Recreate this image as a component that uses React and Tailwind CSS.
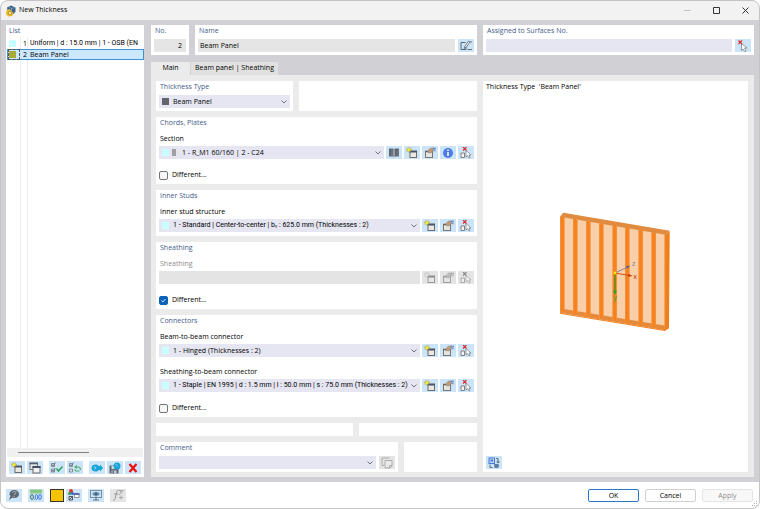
import { useState } from 'react'

const CYAN = '#c8ffff'

/* ---------- icons ---------- */

function Icon({ children, className = 'h-3 w-3' }) {
    return (
        <svg viewBox="0 0 24 24" fill="none" className={className} aria-hidden="true">
            {children}
        </svg>
    )
}

const NewIcon = () => (
    <Icon>
        <rect x="8" y="9" width="13" height="12" fill="#ebe8e2" stroke="#6c6c6c" strokeWidth="2" />
        <path d="M7 9h15" stroke="#4a5468" strokeWidth="4" />
        <path d="M6 0v11M0 5.500h12M2 1.500l8 8M10 1.500l-8 8" stroke="#a89b34" strokeWidth="1.6" />
        <circle cx="6" cy="5.500" r="3.2" fill="#f3ea22" />
    </Icon>
)

const CopyWindowIcon = () => (
    <Icon>
        <rect x="2" y="2" width="15" height="13" fill="#e4e6ea" stroke="#777" strokeWidth="2" />
        <path d="M1 3h17" stroke="#555c6c" strokeWidth="3" />
        <rect x="8" y="9" width="14" height="13" fill="#f2f2f2" stroke="#666" strokeWidth="2" />
        <path d="M7 10h16" stroke="#454d60" strokeWidth="4" />
    </Icon>
)

const CheckAllIcon = () => (
    <Icon>
        <path d="M1 3h6v6H1zM1 14h6v6H1z" stroke="#777" strokeWidth="1.6" />
        <path d="M2 5l2 3 5-7M2 16l2 3 5-7" stroke="#555" strokeWidth="1.4" />
        <path d="M11 13l4 5 8-9" stroke="#25a35a" strokeWidth="3" />
    </Icon>
)

const CheckInvertIcon = () => (
    <Icon>
        <path d="M1 3h6v6H1zM1 14h6v6H1z" stroke="#777" strokeWidth="1.6" />
        <path d="M2 5l2 3 5-7" stroke="#555" strokeWidth="1.4" />
        <path d="M13 10h6c3 0 4 2 4 6M21 18h-5c-3 0-4-1-4-3" stroke="#4fae72" strokeWidth="2.4" />
        <path d="M16 6l-6 4 6 4z" fill="#4fae72" />
    </Icon>
)

const ImportIcon = () => (
    <Icon>
        <path d="M1 12c0-5 4-7 8-7 3 0 5 1 6 3h3V5l6 7-6 7v-3h-3c-1 2-3 3-6 3-4 0-8-2-8-7z" fill="#17a5d8" />
        <path d="M5 12l3-3 2 3-3 3" stroke="#a8e2f6" strokeWidth="1.600" />
    </Icon>
)

const SaveIcon = () => (
    <Icon>
        <path d="M1 7h18v16H1z" fill="#5d6874" />
        <rect x="5" y="8" width="9" height="6" fill="#d5dde5" />
        <rect x="5" y="17" width="10" height="6" fill="#c5ccd3" />
        <rect x="7" y="18" width="3" height="5" fill="#5d6874" />
        <circle cx="16" cy="8" r="7" fill="#17a5d8" />
        <path d="M12 6l3-2 2 3-2 3" stroke="#7fd3ee" strokeWidth="1.4" />
    </Icon>
)

const DeleteIcon = () => (
    <Icon>
        <path d="M5 4l14 16M19 4L5 20" stroke="#ee1010" strokeWidth="4.5" />
    </Icon>
)

const BookIcon = () => (
    <Icon>
        <path d="M2 3h8l2 2 2-2h8v16h-8l-2 2-2-2H2z" fill="#5f6870" />
        <path d="M12 5v15" stroke="#c3d3df" strokeWidth="2" />
        <path d="M8 4v14M20 4v14" stroke="#7d868f" strokeWidth="1.5" />
    </Icon>
)

const EditIcon = () => (
    <Icon>
        <rect x="3" y="9" width="14" height="12" fill="#e6e4df" stroke="#777" strokeWidth="2" />
        <path d="M2 9h16" stroke="#666" strokeWidth="3" />
        <path d="M8 7l5-5h7l-2 6-5 4-5-1z" fill="#c09a78" stroke="#97806b" />
        <path d="M17 3h7M19 7h4" stroke="#6b91c8" strokeWidth="2.6" />
    </Icon>
)

const InfoIcon = () => (
    <Icon>
        <circle cx="12" cy="12" r="10" fill="#4f7be6" />
        <path d="M12 10v8M12 5v3" stroke="#fff" strokeWidth="3" />
    </Icon>
)

const PickIcon = () => (
    <Icon>
        <path d="M2 12h7v9H2z" fill="#f4f4f4" stroke="#777" strokeWidth="1.8" />
        <path d="M12 7v13l3-3 3 5 2-1-2-5h4z" fill="#fff" stroke="#777" strokeWidth="1.4" />
        <path d="M6 0l7 7M13 0L6 7" stroke="#de2c2c" strokeWidth="2.4" />
    </Icon>
)

const PickSurfaceIcon = () => (
    <Icon>
        <path d="M9 7v14l3-3 3 5 3-1-3-6h5z" fill="#fff" stroke="#777" strokeWidth="1.4" />
        <path d="M3 1l7 7M10 1L3 8" stroke="#de2c2c" strokeWidth="2.6" />
    </Icon>
)

const RenameIcon = () => (
    <Icon>
        <path d="M11 5H2v14h10v-6" stroke="#5b6670" strokeWidth="2" />
        <path d="M8 17l2-5 7-10 3 2-7 10z" fill="#e9f2f8" stroke="#5b6670" strokeWidth="1.6" />
        <path d="M20 4h4M15 19h9" stroke="#5b6670" strokeWidth="1.8" />
    </Icon>
)

const CopyIcon = () => (
    <Icon>
        <path d="M17 2H2v15h4" stroke="#888" strokeWidth="2" />
        <path d="M8 7h14v11l-4 4H8z" fill="#eee" stroke="#888" strokeWidth="2" />
        <path d="M22 17h-5v5" stroke="#888" strokeWidth="2" />
    </Icon>
)

const SyncIcon = () => (
    <Icon>
        <rect x="2" y="2" width="11" height="11" fill="#bcd2fa" stroke="#4a78d4" strokeWidth="2" />
        <path d="M5 5h5v4H5z" fill="#4a78d4" />
        <path d="M16 3h4v8M4 15v6h5" stroke="#5a6c80" strokeWidth="2" />
        <path d="M16 9l4 4 4-4z" fill="#5a6c80" />
        <path d="M12 14h8c3 0 3 8-2 8h-5z" fill="#5c7ea6" />
    </Icon>
)

const HelpIcon = () => (
    <Icon>
        <path d="M12 2c6 0 10 4 10 8 0 5-4 8-9 8-2 0-3 0-4-1l-7 5 3-8c-1-1-2-2-2-4 0-4 4-8 9-8z" fill="#5d676f" />
        <path d="M9 8c0-4 7-4 7 0 0 2-4 2-4 4M12 14v2" stroke="#b9c6d0" strokeWidth="1.8" />
    </Icon>
)

const UnitsIcon = () => (
    <Icon>
        <rect x="0" y="1" width="24" height="8" fill="#8ccb84" />
        <path d="M4 2v3M8 2v3M12 2v4M16 2v3M20 2v3" stroke="#6fae69" />
        <ellipse cx="4" cy="16" rx="2.800" ry="5" stroke="#3f6f64" strokeWidth="2" />
        <path d="M9 21v1" stroke="#3f6f64" strokeWidth="2" />
        <ellipse cx="13" cy="16" rx="2.600" ry="5" stroke="#3b78e0" strokeWidth="2" />
        <ellipse cx="20" cy="16" rx="2.600" ry="5" stroke="#3b78e0" strokeWidth="2" />
    </Icon>
)

const ColorListIcon = () => (
    <Icon>
        <circle cx="6" cy="4" r="4" fill="#d83a2b" />
        <circle cx="3" cy="9" r="3" fill="#3d9b46" />
        <circle cx="9" cy="9" r="3" fill="#3d61cf" />
        <path d="M2 15h7v7H2zM2 22l7-7" stroke="#555" strokeWidth="2" />
        <path d="M13 10h9v7h-9z" fill="#fff" stroke="#777" strokeWidth="1.6" />
        <path d="M12 10h11" stroke="#3d51a8" strokeWidth="3" />
    </Icon>
)

const MonitorIcon = () => (
    <Icon>
        <rect x="1" y="3" width="22" height="14" fill="#cfe3f3" stroke="#7890a4" strokeWidth="2" />
        <path d="M4 10c4-6 12-6 16 0-4 5-12 5-16 0z" fill="#6d95b4" />
        <circle cx="12" cy="10" r="3" fill="#3f647f" />
        <path d="M12 15v6M6 22h12" stroke="#5c7890" strokeWidth="2.4" />
    </Icon>
)

const FormulaIcon = () => (
    <Icon>
        <path d="M2 22c3 1 4-1 5-6l2-9c1-4 3-5 6-4M4 10h9" stroke="#666" strokeWidth="2" />
        <path d="M15 3h8M15 3l5 6M22 3l-8 9M18 13v8M14 17h8" stroke="#777" strokeWidth="1.8" />
    </Icon>
)

const AppIcon = () => (
    <Icon>
        <path d="M4 5l8-4 9 4v8l-4 5H6z" fill="#3d6289" />
        <path d="M8 4l5 3 6-2M13 7v6" stroke="#86abc9" strokeWidth="1.6" />
        <path d="M3 10l6-2 8 8-2 6-9 1-4-5z" fill="#e8bb32" />
        <circle cx="10" cy="16" r="3.500" fill="#fbe58b" stroke="#ad8114" strokeWidth="1.4" />
    </Icon>
)

const Chevron = () => (
    <svg viewBox="0 0 8 8" fill="none" className="pointer-events-none absolute top-[3px] right-[2px] h-2 w-2">
        <path d="M1.5 2.500L4 5l2.500-2.500" stroke="#777" />
    </svg>
)

/* ---------- controls ---------- */

function ToolButton({ label, children, disabled }) {
    return (
        <button
            type="button"
            aria-label={label}
            disabled={disabled}
            className="flex h-[13px] w-4 shrink-0 items-center justify-center bg-[#cce4f7] disabled:bg-[#e4e4e4]"
        >
            {disabled ? <span className="opacity-60 grayscale">{children}</span> : children}
        </button>
    )
}

function Panel({ title, className = '', bottom = 'pb-[3px]', children }) {
    return (
        <section className={`bg-white px-[3px] ${bottom} ${className}`}>
            <h2 className="h-3 pl-px leading-3 text-[#445c8a]">{title}</h2>
            {children}
        </section>
    )
}

// long values with separators are set in Roboto, whose bar and spaces are narrower
function SelectBox({ id, label, value, swatches = [], pad = 'pl-[14px]', long }) {
    return (
        <div className="relative min-w-0 flex-1">
            <select
                id={id}
                aria-label={label}
                className={`block h-[13px] w-full appearance-none bg-[#e6e6f2] pr-[10px] leading-[13px] ${pad} ${long ? "font-['Roboto','Open_Sans',sans-serif]" : ''}`}
            >
                <option>{value}</option>
            </select>
            <span className="pointer-events-none absolute top-[3px] left-[3px] flex gap-[3px]">
                {swatches.map((s) => (
                    <span key={s.color} className={`h-[7px] ${s.narrow ? 'w-1' : 'w-[7px]'}`} style={{ background: s.color }} />
                ))}
            </span>
            <Chevron />
        </div>
    )
}

function Field({ id, label, disabled, first = 'mt-1', children }) {
    return (
        <div className={first}>
            <label htmlFor={id} className={`block h-3 pl-px leading-3 ${disabled ? 'text-[#8c8c8c]' : ''}`}>
                {label}
            </label>
            <div className="mt-px flex gap-[2px]">
                {children}
                <ToolButton label="New" disabled={disabled}><NewIcon /></ToolButton>
                <ToolButton label="Edit" disabled={disabled}><EditIcon /></ToolButton>
                {id === 'section' && <ToolButton label="Info"><InfoIcon /></ToolButton>}
                <ToolButton label="Pick" disabled={disabled}><PickIcon /></ToolButton>
            </div>
        </div>
    )
}

function Different({ defaultChecked = false }) {
    const [checked, setChecked] = useState(defaultChecked)
    return (
        <label className="mt-[10px] flex h-3 w-fit items-center gap-1 leading-3">
            <span className="relative flex">
                <input
                    type="checkbox"
                    checked={checked}
                    onChange={(e) => setChecked(e.target.checked)}
                    className="h-[9px] w-[9px] appearance-none rounded-[2px] border border-[#757575] bg-[#f6f6f6] checked:border-[#0a63b8] checked:bg-[#0a63b8]"
                />
                {checked && (
                    <svg viewBox="0 0 9 9" fill="none" className="pointer-events-none absolute inset-0 h-[9px] w-[9px]">
                        <path d="M2.500 4.500L4 6l2.500-3" stroke="#fff" strokeWidth="0.8" />
                    </svg>
                )}
            </span>
            Different...
        </label>
    )
}

/* ---------- wall preview ---------- */

const studs = [45, 84, 123, 162, 202, 240, 280, 319, 358]

function WallPreview() {
    const top = (x) => 50 + (x - 45) * 0.168
    const bottom = (x) => 338 + (x - 45) * 0.165
    return (
        <svg viewBox="0 0 420 420" className="h-[140px] w-[140px]">
            <polygon points="45,50 54,40 373,93 372,384 362,391 45,338" fill="#f9cfa9" />
            <polygon points="45,338 56,327 372,379 372,384 362,391" fill="#e5893a" />
            {studs.map((x) => (
                <g key={x}>
                    <polygon points={`${x},${top(x)} ${x + 14},${top(x + 14)} ${x + 14},${bottom(x + 14) - 10} ${x},${bottom(x)}`} fill="#f79034" />
                    <polygon points={`${x + 3},${top(x)} ${x + 11},${top(x + 11)} ${x + 11},${bottom(x) - 4} ${x + 3},${bottom(x) - 2}`} fill="#f58220" />
                </g>
            ))}
            <polygon points="362,104 374,92 372,384 362,391" fill="#ee7f1d" />
            <polygon points="45,50 55,38 374,92 362,104" fill="#e18b40" />
            <path d="M45 340L362 392" stroke="#f58220" strokeWidth="3" />
            <path d="M210 219L248 201" stroke="#8480a0" strokeWidth="3" />
            <polygon points="256,197 243,198 247,206" fill="#635f86" />
            <path d="M210 219L250 226" stroke="#d84a10" strokeWidth="3" />
            <polygon points="263,228 250,221 249,230" fill="#c93608" />
            <path d="M210 219V274" stroke="#6c8c12" strokeWidth="5" />
            <polygon points="210,285 204,272 216,272" fill="#29a32c" />
            <rect x="206" y="215" width="8" height="8" fill="#ffe600" />
            <g fontSize="21" fontFamily="Noto Sans, sans-serif">
                <text x="261" y="199" fill="#8480a0">z</text>
                <text x="265" y="236" fill="#d03a10">x</text>
                <text x="205" y="299" fill="#3a9a2c">y</text>
            </g>
        </svg>
    )
}

/* ---------- page parts ---------- */

const items = [
    { no: 1, name: 'Uniform | d : 15.0 mm | 1 - OSB (EN', color: CYAN, long: true },
    { no: 2, name: 'Beam Panel', color: '#a8ab3c' },
]

function ListPanel() {
    const [selected, setSelected] = useState(2)
    return (
        <aside className="flex w-[138px] shrink-0 flex-col bg-white">
            <h2 className="h-3 pl-[3px] leading-3 text-[#445c8a]">List</h2>
            <div className="relative flex-1 pt-px pl-px">
                <div className="pointer-events-none absolute inset-y-0 left-[14px] w-2 border-x border-[#ececec]" />
                <ul className="relative">
                    {items.map((it) => (
                        <li key={it.no}>
                            <button
                                type="button"
                                onClick={() => setSelected(it.no)}
                                className={`flex h-[11px] w-full items-center border text-left leading-none ${selected === it.no ? 'border-[#3d93d6] bg-[#cce8ff]' : 'border-transparent'}`}
                            >
                                <span className={`flex h-[11px] w-3 shrink-0 items-center border ${selected === it.no ? 'border-dashed border-[#555]' : 'border-transparent'}`}>
                                    <span className="h-[7px] w-[7px]" style={{ background: it.color }} />
                                </span>
                                <span className="w-[10px] shrink-0 pl-[3px]">{it.no}</span>
                                <span className={`whitespace-nowrap ${it.long ? "font-['Roboto','Open_Sans',sans-serif]" : ''}`}>{it.name}</span>
                            </button>
                        </li>
                    ))}
                </ul>
            </div>
            <div className="mx-px flex h-[9px] items-center bg-[#f0f0f0] pl-[11px]">
                <div className="h-px w-[71px] bg-[#808080]" />
            </div>
            <div className="flex gap-[2px] px-[3px] pt-1 pb-[3px]">
                <ToolButton label="New"><NewIcon /></ToolButton>
                <ToolButton label="Duplicate"><CopyWindowIcon /></ToolButton>
                <span className="w-[2px]" />
                <ToolButton label="Select all"><CheckAllIcon /></ToolButton>
                <ToolButton label="Invert selection"><CheckInvertIcon /></ToolButton>
                <span className="flex-1" />
                <ToolButton label="Import"><ImportIcon /></ToolButton>
                <ToolButton label="Save"><SaveIcon /></ToolButton>
                <ToolButton label="Delete"><DeleteIcon /></ToolButton>
            </div>
        </aside>
    )
}

function TopRow() {
    return (
        <div className="flex gap-[6px]">
            <Panel title="No." className="w-[38px]">
                <input aria-label="No." readOnly value="2" className="mt-[2px] block h-[13px] w-full bg-[#e5e5e5] px-1 text-right" />
            </Panel>
            <Panel title="Name" className="w-[282px]">
                <div className="mt-[2px] flex gap-[3px]">
                    <input aria-label="Name" readOnly value="Beam Panel" className="block h-[13px] min-w-0 flex-1 bg-[#e5e5e5] px-[2px]" />
                    <ToolButton label="Edit name"><RenameIcon /></ToolButton>
                </div>
            </Panel>
            <Panel title="Assigned to Surfaces No." className="min-w-0 flex-1">
                <div className="mt-[2px] flex gap-[3px]">
                    <input aria-label="Assigned to Surfaces No." className="block h-[13px] min-w-0 flex-1 bg-[#e6e6f2] px-[2px]" />
                    <ToolButton label="Pick surfaces"><PickSurfaceIcon /></ToolButton>
                </div>
            </Panel>
        </div>
    )
}

function MainTab() {
    return (
        <div className="flex flex-1 gap-[6px] bg-[#ebebeb] px-[6px] pt-[6px] pb-[5px] pl-[5px]">
            <div className="flex w-[321px] shrink-0 flex-col gap-[6px]">
                <div className="flex gap-[6px]">
                    <Panel title="Thickness Type" className="w-[137px]">
                        <div className="mt-[2px] flex">
                            <SelectBox label="Thickness Type" value="Beam Panel" swatches={[{ color: '#646470' }]} />
                        </div>
                    </Panel>
                    <div className="flex-1 bg-white" />
                </div>

                <Panel title="Chords, Plates">
                    <Field id="section" label="Section">
                        <SelectBox id="section" value="1 - R_M1 60/160 | 2 - C24" swatches={[{ color: CYAN }, { color: '#a0a0a0', narrow: true }]} pad="pl-[23px]" />
                        <ToolButton label="Library"><BookIcon /></ToolButton>
                    </Field>
                    <Different />
                </Panel>

                <Panel title="Inner Studs" bottom="pb-1">
                    <Field id="studs" label="Inner stud structure">
                        <SelectBox id="studs" long value="1 - Standard | Center-to-center | bᵧ : 625.0 mm (Thicknesses : 2)" swatches={[{ color: CYAN }]} />
                    </Field>
                </Panel>

                <Panel title="Sheathing">
                    <Field id="sheathing" label="Sheathing" disabled>
                        <input id="sheathing" disabled className="h-[13px] min-w-0 flex-1 bg-[#e4e4e4]" />
                    </Field>
                    <Different defaultChecked />
                </Panel>

                <Panel title="Connectors">
                    <Field id="beam" label="Beam-to-beam connector">
                        <SelectBox id="beam" value="1 - Hinged (Thicknesses : 2)" swatches={[{ color: CYAN }]} />
                    </Field>
                    <Field id="staple" label="Sheathing-to-beam connector" first="mt-[9px]">
                        <SelectBox id="staple" long value="1 - Staple | EN 1995 | d : 1.5 mm | l : 50.0 mm | s : 75.0 mm (Thicknesses : 2)" swatches={[{ color: CYAN }]} />
                    </Field>
                    <Different />
                </Panel>

                <div className="flex h-[13px] gap-[6px]">
                    <div className="w-[197px] bg-white" />
                    <div className="flex-1 bg-white" />
                </div>

                <div className="flex gap-[6px]">
                    <Panel title="Comment" className="w-[242px]">
                        <div className="mt-[2px] flex gap-[3px]">
                            <SelectBox label="Comment" value="" />
                            <ToolButton label="Copy comment" disabled><CopyIcon /></ToolButton>
                        </div>
                    </Panel>
                    <div className="flex-1 bg-white" />
                </div>
            </div>

            <section className="flex min-w-0 flex-1 flex-col bg-white px-[3px] pb-[3px]">
                <p className="h-3 leading-3 whitespace-pre">{"Thickness Type  'Beam Panel'"}</p>
                <div className="mb-[10px] flex flex-1 items-center justify-center pr-[2px]">
                    <WallPreview />
                </div>
                <ToolButton label="Refresh view"><SyncIcon /></ToolButton>
            </section>
        </div>
    )
}

function Footer() {
    const base = 'h-[13px] w-[51px] rounded-[2px] border text-center leading-none'
    return (
        <footer className="relative flex h-[26px] items-center gap-[6px] bg-white pr-[6px] pl-[5px]">
            <ToolButton label="Help"><HelpIcon /></ToolButton>
            <ToolButton label="Units"><UnitsIcon /></ToolButton>
            <div className="flex gap-[2px]">
                <button type="button" aria-label="Color" className="h-[13px] w-[14px] border border-[#333] bg-[#f6c400]" />
                <ToolButton label="Color list"><ColorListIcon /></ToolButton>
            </div>
            <ToolButton label="Display"><MonitorIcon /></ToolButton>
            <ToolButton label="Formula" disabled><FormulaIcon /></ToolButton>
            <div className="ml-auto flex gap-[6px]">
                <button type="button" className={`${base} border-[#2878c8] bg-white`}>OK</button>
                <button type="button" className={`${base} border-[#d0d0d0] bg-white`}>Cancel</button>
                <button type="button" disabled className={`${base} border-[#e4e4e4] bg-[#f8f8f8] text-[#8f8f8f]`}>Apply</button>
            </div>
            <svg viewBox="0 0 6 6" className="absolute right-px bottom-px h-[6px] w-[6px]" fill="#b4b4b4">
                <path d="M4 0h1v1H4zM2 2h1v1H2zM4 2h1v1H4zM0 4h1v1H0zM2 4h1v1H2zM4 4h1v1H4z" />
            </svg>
        </footer>
    )
}

export default function App() {
    return (
        <div className="flex min-h-screen flex-col overflow-hidden rounded-lg border border-[#c4c4c4] bg-[#d0d0d5] font-['Open_Sans','Noto_Sans',sans-serif] text-[7px] text-black">
            <header className="flex h-[19px] items-center gap-[2px] bg-[#f2f2f2] pr-[10px] pl-1">
                <AppIcon />
                <h1>New Thickness</h1>
                <div className="ml-auto flex items-center gap-[22px]">
                    <button type="button" aria-label="Minimize">
                        <svg viewBox="0 0 7 7" className="h-[7px] w-[7px]"><path d="M0 3.500h7" stroke="#c4c4c4" /></svg>
                    </button>
                    <button type="button" aria-label="Maximize">
                        <svg viewBox="0 0 7 7" fill="none" className="h-[7px] w-[7px]"><path d="M.5.5h6v6h-6z" stroke="#333" /></svg>
                    </button>
                    <button type="button" aria-label="Close">
                        <svg viewBox="0 0 7 7" className="h-[7px] w-[7px]"><path d="M.5.5l6 6M6.500.5l-6 6" stroke="#333" /></svg>
                    </button>
                </div>
            </header>

            <main className="flex flex-1 gap-[7px] p-[5px]">
                <ListPanel />
                <div className="flex min-w-0 flex-1 flex-col">
                    <TopRow />
                    <div role="tablist" className="mt-[7px] flex h-[13px] gap-px">
                        <button type="button" role="tab" aria-selected="true" className="w-[39px] bg-[#ebebeb]">Main</button>
                        <button type="button" role="tab" aria-selected="false" className="w-[87px] bg-[#e1e1e1]">Beam panel | Sheathing</button>
                    </div>
                    <MainTab />
                </div>
            </main>
            <Footer />
        </div>
    )
}
